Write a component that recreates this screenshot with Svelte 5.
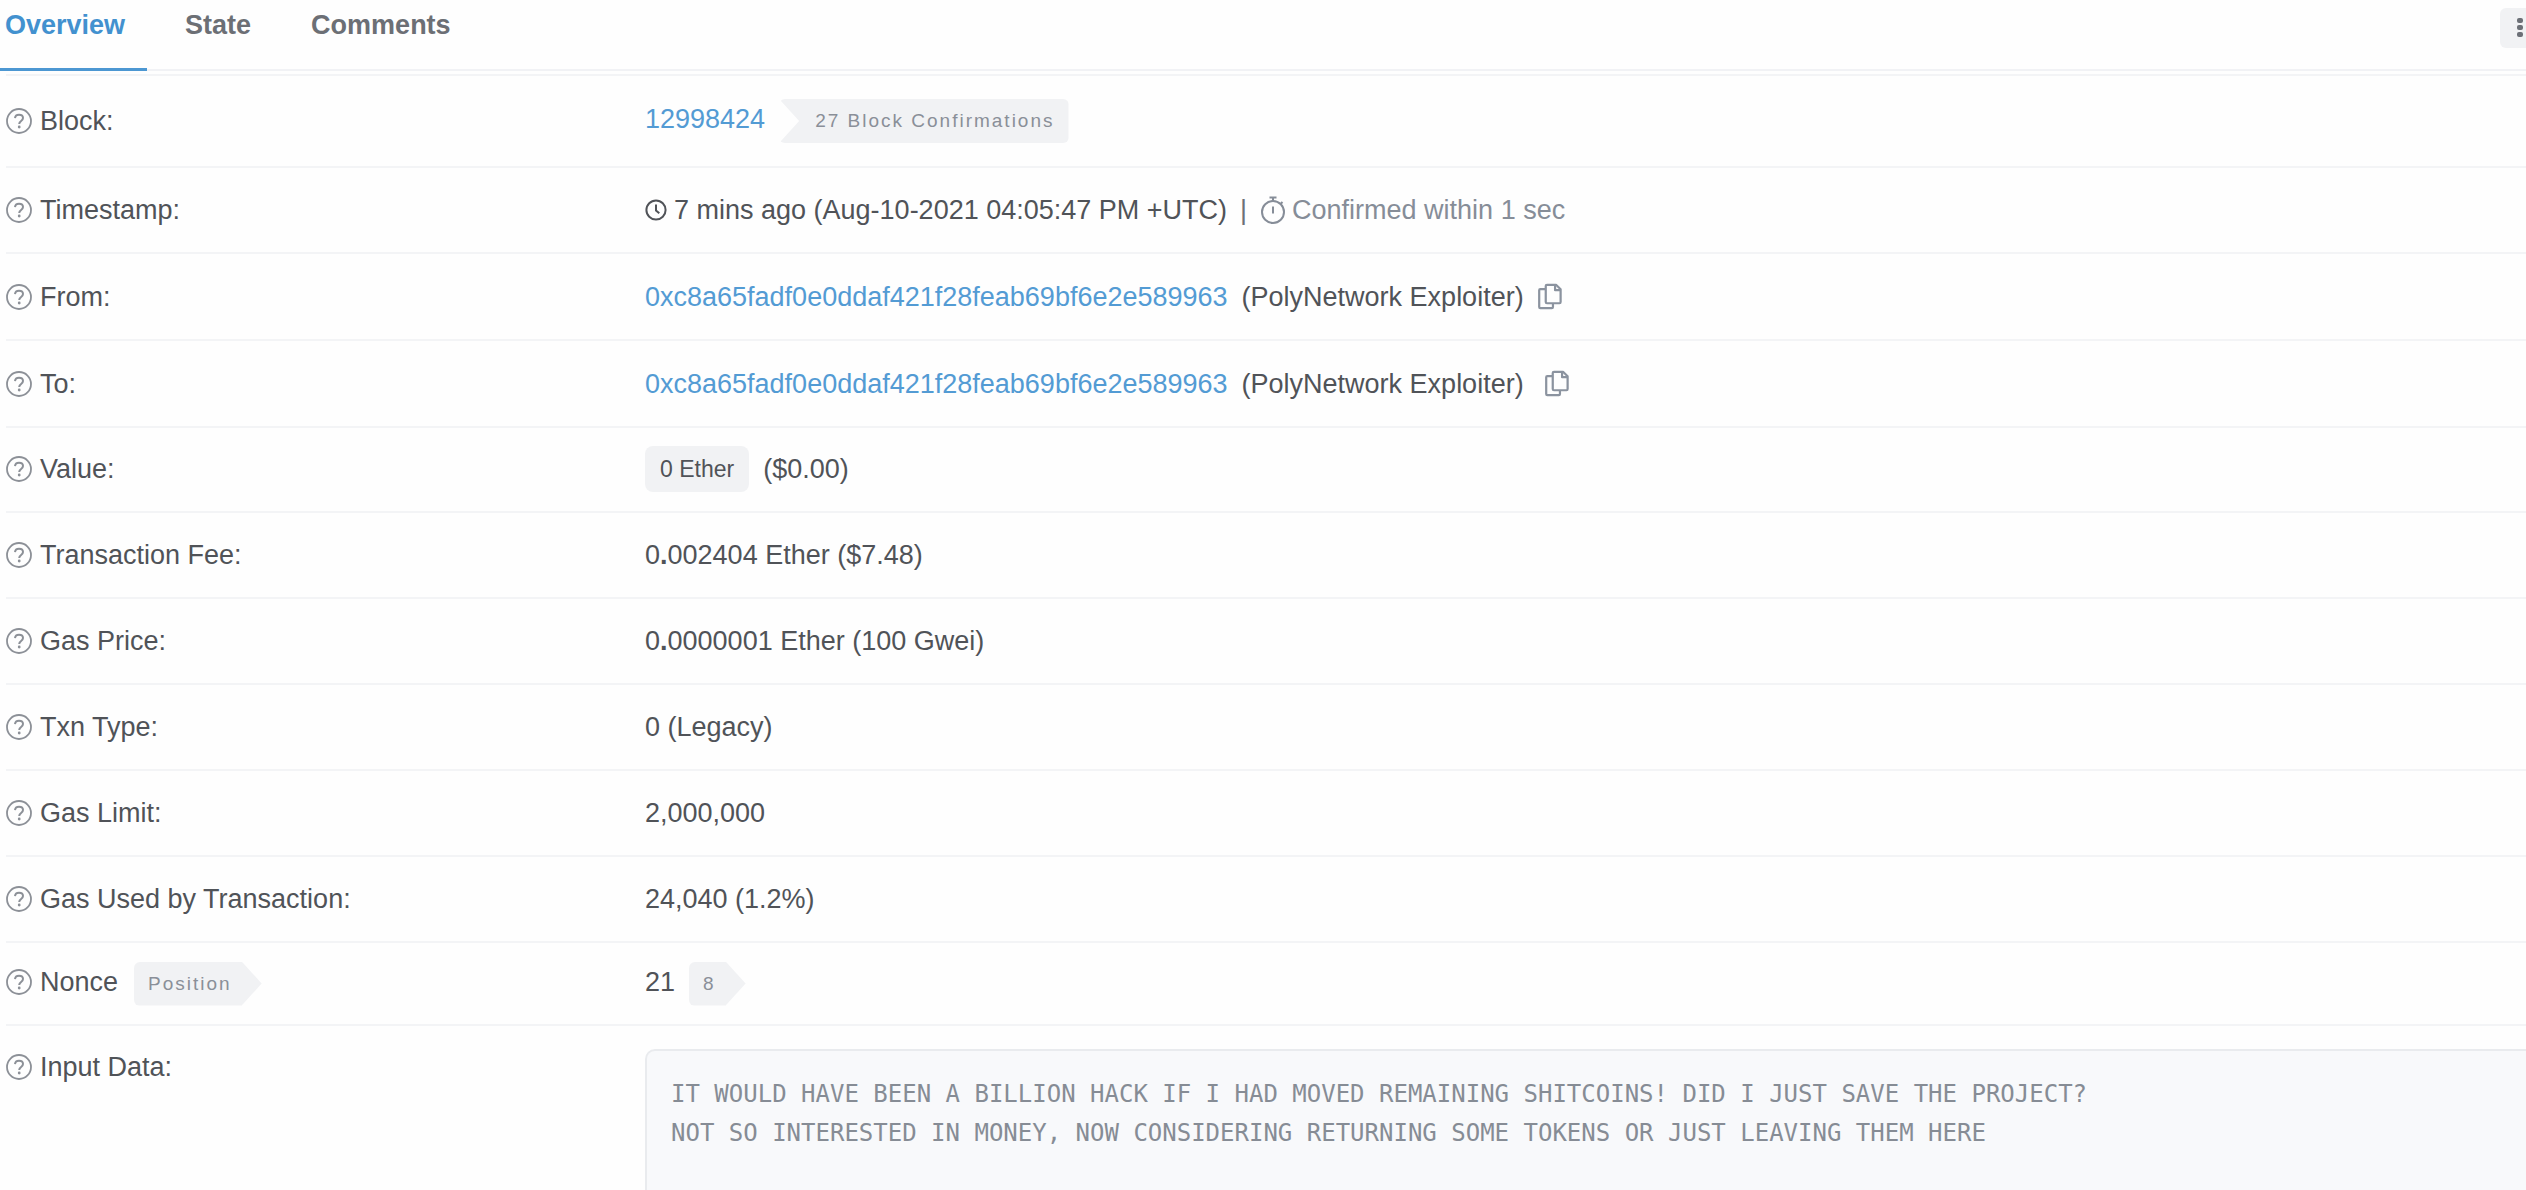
<script>
  const tabs = ['Overview', 'State', 'Comments'];
  let active = $state('Overview');

  const address = '0xc8a65fadf0e0ddaf421f28feab69bf6e2e589963';
  const message =
    'IT WOULD HAVE BEEN A BILLION HACK IF I HAD MOVED REMAINING SHITCOINS! DID I JUST SAVE THE PROJECT?\n' +
    'NOT SO INTERESTED IN MONEY, NOW CONSIDERING RETURNING SOME TOKENS OR JUST LEAVING THEM HERE';
</script>

{#snippet help()}
  <svg class="help" viewBox="0 0 26 26" aria-hidden="true">
    <circle cx="13" cy="13" r="12" fill="none" stroke="currentColor" stroke-width="1.800" />
    <path d="M9 10.200C9.200 8 10.800 6.800 13 6.800c2.300 0 4 1.300 4 3.300 0 2.900-3.800 2.900-3.800 5.900" fill="none" stroke="currentColor" stroke-width="2" />
    <circle cx="13.200" cy="19" r="1.400" fill="currentColor" />
  </svg>
{/snippet}

{#snippet copy()}
  <button class="copy" type="button" aria-label="Copy address">
    <svg viewBox="0 0 26 28" fill="none" stroke="currentColor" stroke-width="2.400" stroke-linejoin="round">
      <path d="M8 6H2.500C1.700 6 1.300 6.500 1.300 7.200V25.500c0 .7.500 1.200 1.200 1.200H15c.8 0 1.200-.5 1.200-1.200V21.500" />
      <path d="M9.700 1.300H19.500L24.500 6.200V20c0 .8-.5 1.300-1.200 1.300H9.700c-.8 0-1.300-.5-1.300-1.300V2.600c0-.8.500-1.300 1.300-1.300z" />
      <path d="M18.500 1.600V7.200H24.300" />
    </svg>
  </button>
{/snippet}

{#snippet label(text)}
  <dt>{@render help()}<span>{text}</span></dt>
{/snippet}

<main>
  <header>
    <nav aria-label="Transaction sections">
      {#each tabs as tab}
        <button type="button" class="tab" class:active={active === tab} onclick={() => (active = tab)}>{tab}</button>
      {/each}
    </nav>
    <button class="more" type="button" aria-label="More options">
      <svg viewBox="0 0 8 22" fill="currentColor" aria-hidden="true">
        <rect x="1" y="1" width="6" height="5" rx="2" />
        <rect x="1" y="8" width="6" height="5" rx="2" />
        <rect x="1" y="15" width="6" height="5" rx="2" />
      </svg>
    </button>
  </header>

  <dl>
    <div class="row block">
      {@render label('Block:')}
      <dd><a href="#block">12998424</a><span class="badge notch">27 Block Confirmations</span></dd>
    </div>
    <div class="row">
      {@render label('Timestamp:')}
      <dd class="time">
        <svg class="clock" viewBox="0 0 22 22" fill="none" stroke="currentColor" stroke-width="2" aria-hidden="true">
          <circle cx="11" cy="11" r="9.600" />
          <path d="M11 5.500V11.500L14.300 14.300" />
        </svg>
        <span>7 mins ago (Aug-10-2021 04:05:47 PM +UTC)</span>
        <span class="bar">|</span>
        <span class="confirmed">
          <svg class="watch" viewBox="0 0 26 28" fill="none" stroke="currentColor" stroke-width="2" aria-hidden="true">
            <circle cx="13" cy="16" r="11" />
            <path d="M13 5V2M9.500 1.500H16.500M13 10.500V17.500M20.500 8L22.500 6" />
          </svg>
          <span>Confirmed within 1 sec</span>
        </span>
      </dd>
    </div>
    <div class="row address">
      {@render label('From:')}
      <dd><a href="#from">{address}</a><span>(PolyNetwork Exploiter)</span>{@render copy()}</dd>
    </div>
    <div class="row address to">
      {@render label('To:')}
      <dd><a href="#to">{address}</a><span>(PolyNetwork Exploiter)</span>{@render copy()}</dd>
    </div>
    <div class="row value">
      {@render label('Value:')}
      <dd><span class="amount">0 Ether</span><span>($0.00)</span></dd>
    </div>
    <div class="row">
      {@render label('Transaction Fee:')}
      <dd><span>0<b>.</b>002404 Ether ($7.48)</span></dd>
    </div>
    <div class="row">
      {@render label('Gas Price:')}
      <dd><span>0<b>.</b>0000001 Ether (100 Gwei)</span></dd>
    </div>
    <div class="row">
      {@render label('Txn Type:')}
      <dd>0 (Legacy)</dd>
    </div>
    <div class="row">
      {@render label('Gas Limit:')}
      <dd>2,000,000</dd>
    </div>
    <div class="row">
      {@render label('Gas Used by Transaction:')}
      <dd>24,040 (1.2%)</dd>
    </div>
    <div class="row nonce">
      <dt>{@render help()}<span>Nonce</span><span class="badge arrow">Position</span></dt>
      <dd><span>21</span><span class="badge arrow">8</span></dd>
    </div>
    <div class="row input">
      {@render label('Input Data:')}
      <dd><textarea readonly aria-label="Input Data" value={message}></textarea></dd>
    </div>
  </dl>
</main>

<style>
  :global(body) {
    margin: 0;
    background: #fefefe;
  }

  main {
    display: flex;
    flex-direction: column;
    min-height: 100vh;
    overflow: hidden;
    box-sizing: border-box;
    color: #505358;
    font: 27px/32px 'Liberation Sans', Arial, sans-serif;
  }

  button {
    border: 0;
    background: none;
    font: inherit;
    cursor: pointer;
  }

  header {
    display: flex;
    justify-content: space-between;
    align-items: flex-start;
    box-shadow: inset 0 -2px #f1f2f5;
  }

  nav {
    display: flex;
    gap: 16px;
  }

  .tab {
    padding: 9px 22px 27px;
    border-bottom: 3px solid transparent;
    color: #6c6f75;
    font-weight: bold;
  }

  .tab:first-child {
    padding-left: 5px;
  }

  .tab.active {
    color: #4291cf;
    border-color: #4c97d2;
  }

  .more {
    display: flex;
    justify-content: center;
    align-items: center;
    width: 40px;
    height: 40px;
    margin: 8px -14px 0 0;
    padding: 0;
    border-radius: 6px;
    background: #f1f2f4;
    color: #6c7077;
  }

  .more svg {
    width: 8px;
    height: 22px;
  }

  dl {
    display: flex;
    flex-direction: column;
    flex: 1;
    margin: 3px 0 0 6px;
  }

  .row {
    display: grid;
    grid-template-columns: 1fr 3fr;
    column-gap: 12px;
    align-items: center;
    box-sizing: border-box;
    min-height: 86px;
    border-top: 2px solid #f3f4f6;
  }

  .row.block {
    min-height: 92px;
  }

  .row.address {
    min-height: 87px;
  }

  .row.value {
    min-height: 85px;
  }

  .row.nonce {
    min-height: 83px;
  }

  dt,
  dd {
    display: flex;
    align-items: center;
    margin: 0;
    white-space: nowrap;
  }

  dt {
    gap: 8px;
  }

  dd {
    gap: 14px;
  }

  .block dd,
  .nonce dt,
  .nonce dd {
    padding-bottom: 4px;
  }

  .value dt,
  .value dd {
    padding-bottom: 2px;
  }

  a {
    color: #539bd4;
    text-decoration: none;
  }

  .help {
    width: 26px;
    height: 26px;
    color: #8c9097;
  }

  .time {
    gap: 7px;
  }

  .clock {
    width: 22px;
    height: 22px;
  }

  .bar {
    padding: 0 6px;
    color: #6c7077;
  }

  .confirmed {
    display: flex;
    align-items: center;
    gap: 6px;
    color: #868d98;
  }

  .watch {
    width: 26px;
    height: 28px;
  }

  .copy {
    display: flex;
    padding: 0;
    color: #8b939f;
  }

  .to .copy {
    padding-left: 7px;
  }

  .copy svg {
    width: 24px;
    height: 27px;
  }

  .badge {
    margin-top: 4px;
    padding: 6px 14px;
    border-radius: 6px;
    background: #f1f2f4;
    color: #8a8f98;
    font-size: 19px;
    letter-spacing: 2px;
  }

  .notch {
    padding: 6px 14px 6px 36px;
    clip-path: polygon(0 0, 100% 0, 100% 100%, 0 100%, 20px 50%);
  }

  .arrow {
    padding-right: 30px;
    clip-path: polygon(0 0, calc(100% - 20px) 0, 100% 50%, calc(100% - 20px) 100%, 0 100%);
  }

  dt .badge {
    margin-left: 8px;
  }

  .amount {
    padding: 7px 15px;
    border-radius: 8px;
    background: #f1f2f4;
    font-size: 23px;
  }

  .row.input {
    flex: 1;
    align-items: stretch;
  }

  .input dt {
    align-self: start;
    padding-top: 25px;
  }

  .input dd {
    align-items: stretch;
    padding-top: 23px;
  }

  textarea {
    flex: 1;
    box-sizing: border-box;
    padding: 24px;
    border: 2px solid #e9ebee;
    border-width: 2px 0 0 2px;
    border-radius: 10px 0 0 0;
    background: #f8f9fb;
    color: #868c95;
    font: 24px/39px 'DejaVu Sans Mono', monospace;
    resize: none;
    outline: none;
  }
</style>
